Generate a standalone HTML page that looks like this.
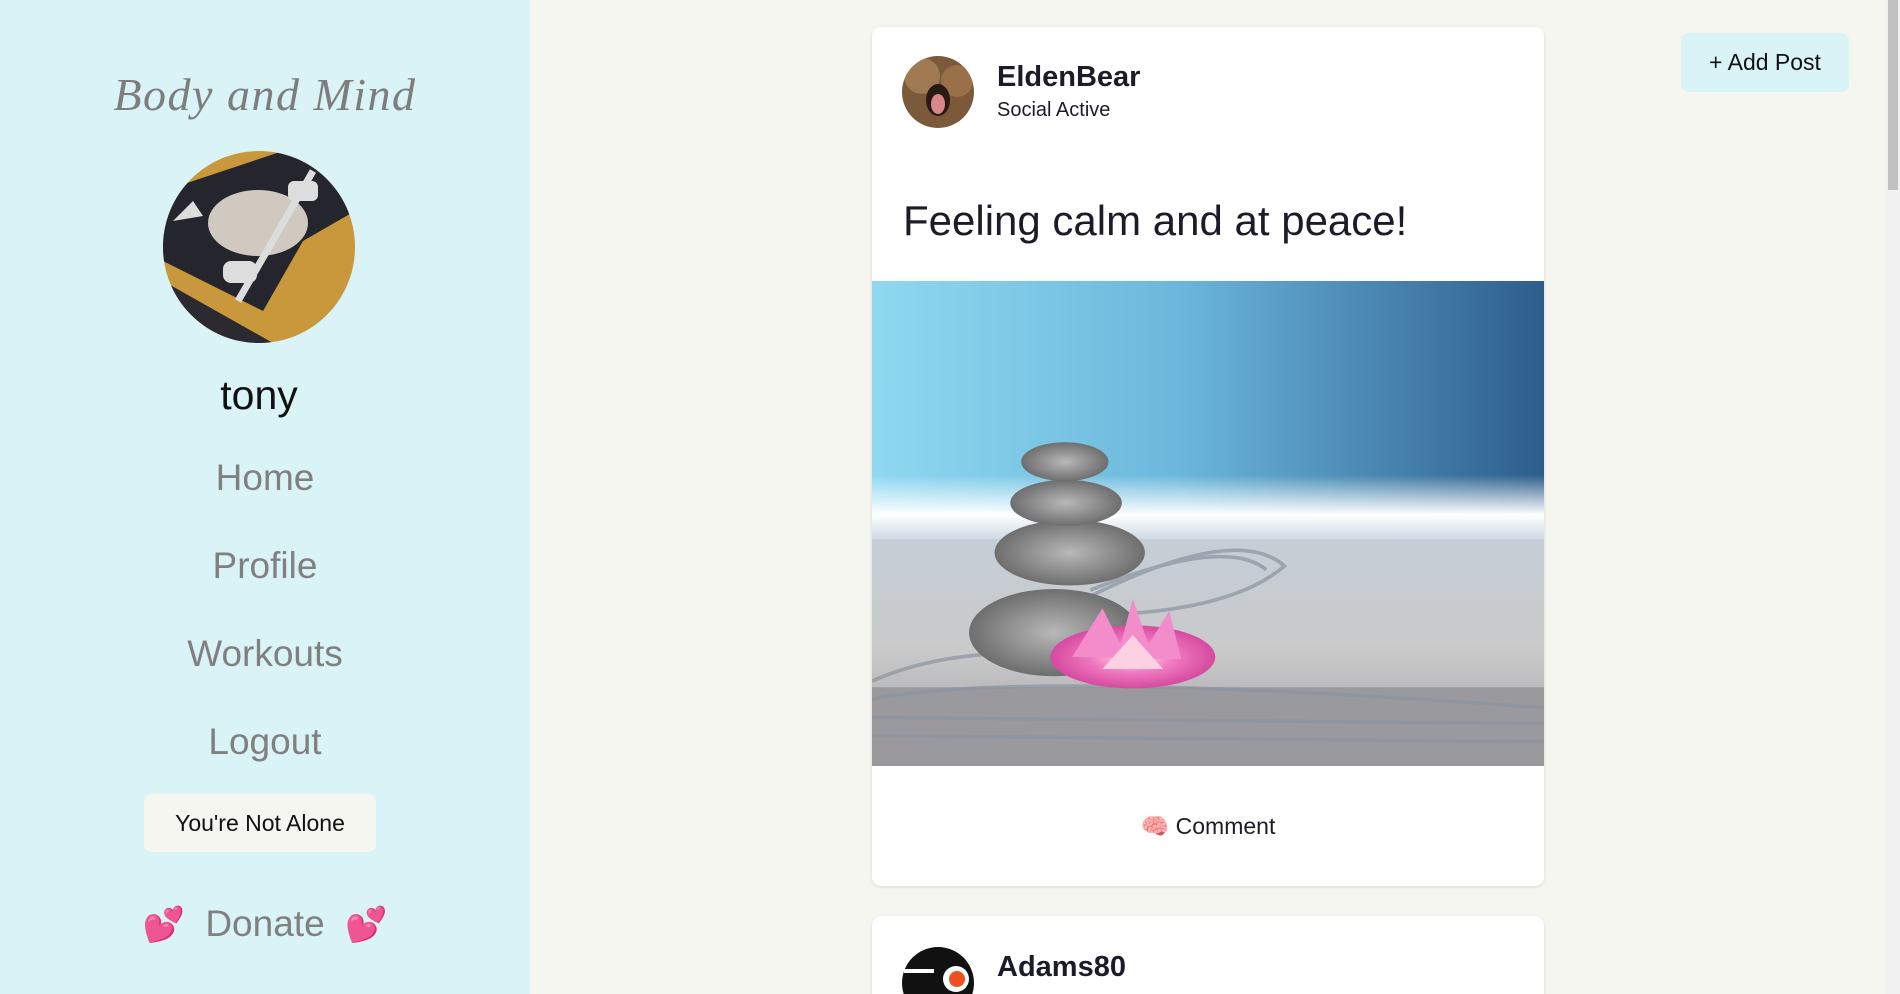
<!DOCTYPE html>
<html><head><meta charset="utf-8"><style>
*{margin:0;padding:0;box-sizing:border-box}
html,body{width:1900px;height:994px;overflow:hidden}
body{background:#f5f6ef;font-family:"Liberation Sans",sans-serif;position:relative}
.side{position:absolute;left:0;top:0;width:530px;height:994px;background:#d9f3f7}
.c{position:absolute;left:0;width:530px;text-align:center}
.title{top:68px;font-family:"Liberation Serif",serif;font-style:italic;font-size:46px;color:#7d7d7d;letter-spacing:1.5px;left:0}
.nav{font-size:37px;color:#808080}
.card{position:absolute;left:872px;width:672px;background:#fff;border-radius:9px;box-shadow:0 1px 3px rgba(0,0,0,.12);overflow:hidden}
.sb{position:absolute;right:0;top:0;width:15px;height:994px;background:#f1f1f1}
.sb div{position:absolute;left:3px;top:0;width:10px;height:190px;background:#c1c1c1}
</style></head><body>
<div class="side">
<div class="c title">Body and Mind</div>
<svg style="position:absolute;left:163px;top:151px" width="192" height="192" viewBox="0 0 192 192">
<defs><clipPath id="cp"><circle cx="96" cy="96" r="96"/></clipPath></defs>
<g clip-path="url(#cp)"><rect width="192" height="192" fill="#c9973c"/>
<path d="M0 40 L120 0 L192 0 L192 60 L140 90 L100 160 L0 110Z" fill="#25252d"/>
<path d="M0 130 L110 192 L0 192Z" fill="#2a2a30"/>
<ellipse cx="95" cy="72" rx="50" ry="33" fill="#cfc9c0"/>
<line x1="150" y1="20" x2="75" y2="150" stroke="#ddd" stroke-width="7"/>
<rect x="60" y="110" width="34" height="22" rx="8" fill="#ddd"/>
<rect x="125" y="30" width="30" height="20" rx="6" fill="#ddd"/>
<path d="M10 70 L30 50 L40 65Z" fill="#ddd"/></g></svg>
<div class="c" style="top:372px;font-size:41px;color:#111;left:-6px">tony</div>
<div class="c nav" style="top:457px">Home</div>
<div class="c nav" style="top:545px">Profile</div>
<div class="c nav" style="top:633px">Workouts</div>
<div class="c nav" style="top:721px">Logout</div>
<div style="position:absolute;left:144px;top:794px;width:232px;height:58px;background:#f5f6ef;border-radius:8px;text-align:center;line-height:58px;font-size:23px;color:#111">You're Not Alone</div>
<div class="c nav" style="top:903px"><span style="color:#f0345f;font-size:34px">💕</span>&nbsp; Donate &nbsp;<span style="color:#f0345f;font-size:34px">💕</span></div>
</div>

<div class="card" style="top:27px;height:859px">
<svg style="position:absolute;left:30px;top:29px" width="72" height="72"><defs><clipPath id="b"><circle cx="36" cy="36" r="36"/></clipPath></defs><g clip-path="url(#b)"><rect width="72" height="72" fill="#7a5a3a"/><circle cx="20" cy="20" r="18" fill="#a07a52"/><circle cx="55" cy="25" r="16" fill="#9a7048"/><ellipse cx="36" cy="44" rx="12" ry="16" fill="#2a1a14"/><ellipse cx="36" cy="48" rx="7" ry="10" fill="#d9868c"/></g></svg>
<div style="position:absolute;left:125px;top:34px;font-size:29px;font-weight:bold;color:#1c1c28">EldenBear</div>
<div style="position:absolute;left:125px;top:72px;font-size:20px;color:#1c1c28">Social Active</div>
<div style="position:absolute;left:31px;top:170px;font-size:42px;color:#1c1c28">Feeling calm and at peace!</div>
<svg style="position:absolute;left:0;top:254px" width="672" height="485" viewBox="0 0 554 400" preserveAspectRatio="none">
<defs>
<linearGradient id="sky" x1="0" y1="0" x2="1" y2="0"><stop offset="0" stop-color="#8fd8f0"/><stop offset=".45" stop-color="#6cb8dc"/><stop offset="1" stop-color="#2d5d8c"/></linearGradient>
<linearGradient id="hz" x1="0" y1="0" x2="0" y2="1"><stop offset="0" stop-color="#fff" stop-opacity="0"/><stop offset=".6" stop-color="#fff"/><stop offset="1" stop-color="#c8d6e2"/></linearGradient>
<linearGradient id="sand" x1="0" y1="0" x2="0" y2="1"><stop offset="0" stop-color="#c5ced6"/><stop offset=".5" stop-color="#c9c9ca"/><stop offset="1" stop-color="#9c9ca0"/></linearGradient>
<radialGradient id="st"><stop offset="0" stop-color="#b8b8b8"/><stop offset="1" stop-color="#6e6e6e"/></radialGradient>
<radialGradient id="lo"><stop offset="0" stop-color="#ffe0e8"/><stop offset=".5" stop-color="#f07ac0"/><stop offset="1" stop-color="#d54a9f"/></radialGradient>
</defs>
<rect width="554" height="215" fill="url(#sky)"/>
<rect y="160" width="554" height="55" fill="url(#hz)"/>
<rect y="213" width="554" height="187" fill="url(#sand)"/>
<rect y="335" width="554" height="65" fill="#9a9a9e"/>
<g fill="none" stroke="#8a94a0" stroke-width="3" opacity=".7">
<path d="M180 260 Q300 200 340 235 Q300 270 200 275"/><path d="M180 255 Q290 210 325 238"/><path d="M0 330 Q90 290 230 320"/><path d="M0 345 Q120 320 554 352"/><path d="M0 360 L554 365"/><path d="M0 375 L554 380"/></g>
<ellipse cx="150" cy="290" rx="70" ry="36" fill="url(#st)"/>
<ellipse cx="163" cy="224" rx="62" ry="27" fill="url(#st)"/>
<ellipse cx="160" cy="183" rx="46" ry="19" fill="url(#st)"/>
<ellipse cx="159" cy="149" rx="36" ry="16" fill="url(#st)"/>
<ellipse cx="215" cy="310" rx="68" ry="26" fill="url(#lo)"/>
<path d="M165 310 L190 270 L205 300 L215 262 L228 300 L245 272 L255 312Z" fill="#f28ccb"/>
<path d="M190 320 L215 292 L240 320Z" fill="#ffd0e2"/>
</svg>
<div style="position:absolute;left:0;top:784px;width:672px;text-align:center;font-size:23px;color:#1c1c28;line-height:30px"><span style="color:#ea5bb0">🧠</span> Comment</div>
</div>

<div class="card" style="top:916px;height:120px">
<svg style="position:absolute;left:30px;top:31px" width="72" height="72"><circle cx="36" cy="36" r="36" fill="#111"/><circle cx="54" cy="32" r="13" fill="#fff"/><circle cx="55" cy="32" r="8" fill="#f04e23"/><rect x="2" y="22" width="30" height="4" fill="#fff"/></svg>
<div style="position:absolute;left:125px;top:35px;font-size:29px;font-weight:bold;color:#1c1c28">Adams80</div>
</div>

<div style="position:absolute;left:1681px;top:33px;width:168px;height:59px;background:#d9f3f7;border-radius:8px;text-align:center;line-height:59px;font-size:23px;color:#111">+ Add Post</div>
<div class="sb"><div></div></div>
</body></html>
